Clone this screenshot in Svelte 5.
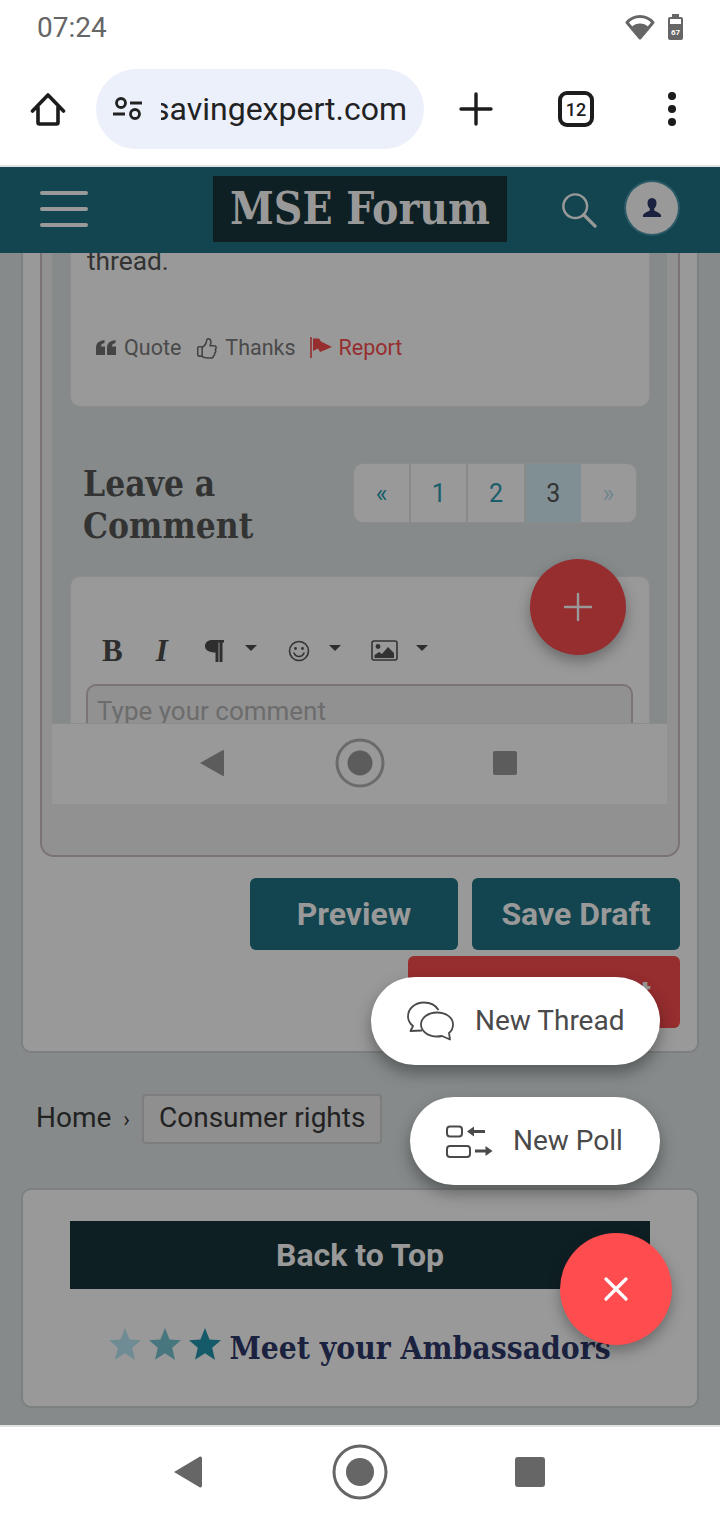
<script>
  const pages = [
    { label: "«", kind: "nav" },
    { label: "1", kind: "" },
    { label: "2", kind: "" },
    { label: "3", kind: "current" },
    { label: "»", kind: "off" },
  ];
  const starColors = ["#6f8c95", "#47767f", "#155a68"];
  const star = "M12 0l3.4 8.6 8.6.6-6.6 5.7 2.1 9.1L12 19l-7.5 4.9 2.1-9.1L0 9.2l8.6-.6z";
</script>

<div class="phone">
  <div class="status">
    <span class="clock">07:24</span>
    <div class="status-icons">
      <svg width="30" height="26" viewBox="0 0 30 26">
        <path d="M15 24 2 8.5C5.5 4.5 10 2.5 15 2.5s9.5 2 13 6z" fill="none" stroke="#666" stroke-width="3" stroke-linejoin="round" />
        <path d="M15 24 7 12.5C9 10.5 12 9.5 15 9.5s6 1 8 3z" fill="#666" />
      </svg>
      <div class="battery"><span>67</span></div>
    </div>
  </div>

  <div class="browser">
    <svg class="home" width="36" height="36" viewBox="0 0 36 36">
      <path d="M2.5 20 18 4l15.500 16M8 16v15.500c0 .8.700 1.500 1.500 1.500h17c.8 0 1.500-.7 1.500-1.500V16" fill="none" stroke="#1c1c1c" stroke-width="3.600" stroke-linecap="round" stroke-linejoin="round" />
    </svg>
    <div class="url">
      <svg width="30" height="24" viewBox="0 0 30 24">
        <circle cx="8" cy="6" r="4.500" fill="none" stroke="#222" stroke-width="2.800" />
        <path d="M17 6h12M0 17h12" stroke="#222" stroke-width="2.800" />
        <circle cx="22" cy="17" r="4.500" fill="none" stroke="#222" stroke-width="2.800" />
      </svg>
      <div class="url-text"><span>moneysavingexpert.com</span></div>
    </div>
    <svg class="plus" width="34" height="34" viewBox="0 0 34 34">
      <path d="M17 2v30M2 17h30" stroke="#1c1c1c" stroke-width="3.400" stroke-linecap="round" />
    </svg>
    <div class="tabs">12</div>
    <div class="dots"><i></i><i></i><i></i></div>
  </div>

  <div class="viewport">
    <header class="site-head">
      <div class="burger"><i></i><i></i><i></i></div>
      <div class="logo">MSE Forum</div>
      <svg class="search" width="36" height="36" viewBox="0 0 38 38">
        <circle cx="15" cy="15" r="12.500" fill="none" stroke="#999" stroke-width="2.600" />
        <path d="M24 24 36 36" stroke="#999" stroke-width="3.400" stroke-linecap="round" />
      </svg>
      <div class="avatar">
        <svg width="22" height="22" viewBox="0 0 22 22">
          <path d="M11 1c3 0 4.500 2.200 4.500 5 0 2.500-1 4.500-2.300 5.600v1.600c0 1 4.800 1.600 6.800 4.800v2H2v-2c2-3.200 6.800-3.800 6.800-4.800v-1.600C7.500 10.500 6.500 8.500 6.500 6c0-2.800 1.500-5 4.500-5z" fill="#1b2240" />
        </svg>
      </div>
    </header>

    <div class="scroll">
      <section class="card reply">
        <div class="frame">
          <div class="shot">
            <div class="screen">
              <div class="post">
                <p class="post-text">thread.</p>
                <div class="actions">
                  <span class="action">
                    <svg width="20" height="15" viewBox="0 0 20 15">
                      <path d="M0 15V8C0 3.500 2.500.8 8.500 0v3C6 3.500 5 4.800 5 6.500h4V15zM11 15V8c0-4.500 2.500-7.200 8.500-8v3c-2.500.5-3.500 1.800-3.500 3.500h4V15z" fill="#444" />
                    </svg>
                    Quote
                  </span>
                  <span class="action">
                    <svg width="21" height="22" viewBox="0 0 24 24">
                      <path d="M7 10.500v10.800H3.500c-.8 0-1.500-.7-1.500-1.500V12c0-.8.700-1.500 1.500-1.500zM7 11.500c2.500-1.500 4.500-4 5-7 .2-1.500.5-3 2-3 2 0 3 2 3 4 0 1.500-.5 3-1 4h4.500c1.300 0 2.500 1 2.500 2.300 0 1-.5 1.700-1 2.200.4.500.6 1 .6 1.700 0 1-.6 1.800-1.400 2.200.1.300.2.700.2 1 0 1-.7 1.800-1.500 2.100.1 1.300-1 2.500-2.400 2.500H13c-2.500 0-4-1-6-1.500" fill="none" stroke="#444" stroke-width="1.800" stroke-linejoin="round" />
                    </svg>
                    Thanks
                  </span>
                  <span class="action report">
                    <svg width="22" height="21" viewBox="0 0 22 21">
                      <path d="M1 0v21" stroke="#962d2f" stroke-width="1.600" />
                      <path d="M3 1.500h6l2 3 11 5.500-12 5-2-3.500-5 2.500z" fill="#962d2f" />
                    </svg>
                    Report
                  </span>
                </div>
              </div>

              <div class="comment-head">
                <h2>Leave a<br />Comment</h2>
                <div class="pager">
                  {#each pages as p}
                    <span class={["page", p.kind]}>{p.label}</span>
                  {/each}
                </div>
              </div>

              <div class="editor">
                <div class="toolbar">
                  <b class="tool-b">B</b>
                  <i class="tool-i">I</i>
                  <svg class="tool-p" width="19" height="22" viewBox="0 0 19 22">
                    <path d="M7 0h12v2.500h-1.500V22h-3V2.500h-1V22h-3V12.500C4 12.500 0 10 0 6.200S3 0 7 0z" fill="#2e2e2e" />
                  </svg>
                  <span class="caret first"></span>
                  <svg class="smile" width="22" height="22" viewBox="0 0 22 22">
                    <circle cx="11" cy="11" r="9.500" fill="none" stroke="#333" stroke-width="1.600" />
                    <circle cx="7.500" cy="8.500" r="1.400" fill="#333" />
                    <circle cx="14.500" cy="8.500" r="1.400" fill="#333" />
                    <path d="M6 13c1 2.500 3 3.500 5 3.500s4-1 5-3.500" fill="none" stroke="#333" stroke-width="1.600" stroke-linecap="round" />
                  </svg>
                  <span class="caret"></span>
                  <svg class="pic" width="27" height="21" viewBox="0 0 27 21">
                    <rect x="1" y="1" width="25" height="19" rx="2" fill="none" stroke="#333" stroke-width="1.600" />
                    <circle cx="7" cy="6.500" r="2.400" fill="#333" />
                    <path d="M3.500 18v-3l4.500-3 3 2 6-7 6 6v5z" fill="#333" />
                  </svg>
                  <span class="caret last"></span>
                </div>
                <div class="textarea">Type your comment</div>
              </div>

              <div class="fab-add">
                <svg width="30" height="30" viewBox="0 0 30 30">
                  <path d="M15 2v26M2 15h26" stroke="#999" stroke-width="2.400" stroke-linecap="round" />
                </svg>
              </div>
            </div>

            <div class="shot-nav">
              <svg width="26" height="28" viewBox="0 0 26 28"><path d="M1 14 24 1c.5 0 1 .5 1 1v24c0 .5-.5 1-1 1z" fill="#5c5c5c" /></svg>
              <svg width="50" height="50" viewBox="0 0 50 50">
                <circle cx="25" cy="25" r="23" fill="none" stroke="#6b6b6b" stroke-width="3" />
                <circle cx="25" cy="25" r="12.500" fill="#5c5c5c" />
              </svg>
              <div class="shot-square"></div>
            </div>
          </div>
        </div>

        <div class="form-buttons">
          <button class="btn teal">Preview</button>
          <button class="btn teal">Save Draft</button>
          <button class="btn red">Post Comment</button>
        </div>
      </section>

      <nav class="crumbs">
        <span class="home-link">Home</span>
        <span class="sep">›</span>
        <span class="crumb-box"><span>Consumer rights</span></span>
      </nav>

      <section class="card foot">
        <div class="to-top">Back to Top</div>
        <div class="ambassadors">
          {#each starColors as c}
            <svg width="32" height="32" viewBox="0 0 24 24"><path d={star} fill={c} /></svg>
          {/each}
          <span>Meet your Ambassadors</span>
        </div>
      </section>
    </div>

    <!-- speed dial, above the dimmed page -->
    <div class="pill thread">
      <svg width="48" height="40" viewBox="0 0 48 40">
        <path d="M15 29.500 3.500 30l2.500-5C2.800 22.500 1 19 1 15.500 1 7.500 8 1.500 17 1.500c6 0 11.500 2.500 14.500 7.500" fill="none" stroke="#4a4a4a" stroke-width="1.800" stroke-linejoin="round" />
        <path d="M30 11.500c9 0 16 5 16 12 0 3.500-1.500 6.500-4 8.500l1 6.500-8-3.500c-1.500.3-3.300.5-5 .5-9 0-16-5.500-16-12s7-12 16-12z" fill="none" stroke="#4a4a4a" stroke-width="1.800" stroke-linejoin="round" />
      </svg>
      <span class="pill-label">New Thread</span>
    </div>
    <div class="pill poll">
      <svg width="47" height="33" viewBox="0 0 47 33">
        <rect x="1" y="1.500" width="15" height="10" rx="3" fill="none" stroke="#4a4a4a" stroke-width="2" />
        <rect x="1" y="21" width="23" height="11" rx="3" fill="none" stroke="#4a4a4a" stroke-width="2" />
        <path d="M21 6.500 28 1.500v3.500h11v3H28v3.500zM46.500 26l-7-5v3.500H29v3h10.500V31z" fill="#4a4a4a" />
      </svg>
      <span class="pill-label">New Poll</span>
    </div>
    <div class="fab-close">
      <svg width="26" height="26" viewBox="0 0 26 26">
        <path d="M3 3l20 20M23 3 3 23" stroke="#fff" stroke-width="3.200" stroke-linecap="round" />
      </svg>
    </div>
  </div>

  <div class="android-nav">
    <svg width="30" height="34" viewBox="0 0 30 34"><path d="M1 17 27 1.500c1 0 2 .7 2 1.500v28c0 .8-1 1.500-2 1.500z" fill="#666" /></svg>
    <svg width="56" height="56" viewBox="0 0 56 56">
      <circle cx="28" cy="28" r="26" fill="none" stroke="#666" stroke-width="3" />
      <circle cx="28" cy="28" r="14" fill="#666" />
    </svg>
    <div class="nav-square"></div>
  </div>
</div>

<style>
  :global(body) {
    margin: 0;
    background: #fff;
  }

  .phone {
    width: 720px;
    height: 1520px;
    display: flex;
    flex-direction: column;
    overflow: hidden;
    font-family: Roboto, "Liberation Sans", sans-serif;
  }

  /* Status bar */
  .status {
    height: 55px;
    display: flex;
    align-items: center;
    justify-content: space-between;
    padding: 0 37px 1px;
    box-sizing: border-box;
  }

  .clock {
    font-size: 28px;
    color: #666;
  }

  .status-icons {
    display: flex;
    align-items: center;
    gap: 13px;
  }

  .battery {
    position: relative;
    width: 15px;
    height: 23px;
    margin-top: 2px;
    background: #666;
    border-radius: 2px;
    display: flex;
    justify-content: center;
    align-items: flex-end;
  }

  .battery::before {
    content: "";
    position: absolute;
    top: -3px;
    left: 4px;
    width: 7px;
    height: 3px;
    background: #666;
  }

  .battery::after {
    content: "";
    position: absolute;
    top: 2px;
    left: 2px;
    right: 2px;
    height: 5px;
    background: #fff;
  }

  .battery span {
    font-size: 8px;
    line-height: 14px;
    color: #fff;
    font-weight: 700;
  }

  /* Browser toolbar */
  .browser {
    height: 110px;
    border-bottom: 2px solid #e0e2e2;
    display: flex;
    align-items: flex-start;
    position: relative;
  }

  .home {
    margin: 36px 0 0 30px;
  }

  .url {
    margin: 14px 0 0 30px;
    width: 328px;
    height: 80px;
    border-radius: 40px;
    background: #ecf0fa;
    display: flex;
    align-items: center;
    box-sizing: border-box;
    padding: 0 17px 0 17px;
    gap: 18px;
    flex: none;
  }

  .url svg {
    flex: none;
    margin-top: -1px;
  }

  .url-text {
    flex: 1;
    overflow: hidden;
    display: flex;
    justify-content: flex-end;
    font-size: 32px;
    color: #222;
    white-space: nowrap;
  }

  .url-text span {
    flex: none;
  }

  .plus {
    margin: 37px 0 0 35px;
  }

  .tabs {
    margin: 36px 0 0 65px;
    width: 36px;
    height: 36px;
    box-sizing: border-box;
    border: 4px solid #1c1c1c;
    border-radius: 9px;
    font-size: 18px;
    font-weight: 500;
    color: #1c1c1c;
    display: flex;
    align-items: center;
    justify-content: center;
  }

  .dots {
    margin: 37px 0 0 74px;
    display: flex;
    flex-direction: column;
    gap: 5px;
  }

  .dots i {
    width: 8px;
    height: 8px;
    border-radius: 50%;
    background: #1c1c1c;
  }

  /* Page area */
  .viewport {
    position: relative;
    flex: 1;
    min-height: 0;
    display: flex;
    flex-direction: column;
    background: #868a8a;
  }

  .site-head {
    height: 86px;
    flex: none;
    background: #134550;
    position: relative;
    display: flex;
    align-items: flex-start;
  }

  .burger {
    margin: 24px 0 0 40px;
    display: flex;
    flex-direction: column;
    gap: 12px;
  }

  .burger i {
    width: 48px;
    height: 4px;
    border-radius: 2px;
    background: #999;
  }

  .logo {
    margin: 9px 0 0 125px;
    width: 294px;
    height: 66px;
    background: #0f2024;
    color: #999;
    font-family: "DejaVu Serif Condensed", "DejaVu Serif", serif;
    font-weight: 700;
    font-size: 44px;
    line-height: 66px;
    text-align: center;
    white-space: nowrap;
  }

  .search {
    margin: 25px 0 0 54px;
  }

  .avatar {
    margin: 15px 0 0 29px;
    width: 52px;
    height: 52px;
    box-sizing: border-box;
    border-radius: 50%;
    background: #999;
    box-shadow: 0 0 0 2px #2b5a66;
    display: flex;
    align-items: center;
    justify-content: center;
  }

  .scroll {
    flex: 1;
    min-height: 0;
    overflow: hidden;
    padding: 0 21px;
  }

  .card {
    background: #999;
    border: 2px solid #7d8080;
    border-radius: 10px;
    box-sizing: border-box;
  }

  .card.reply {
    height: 800px;
    border-top: none;
    border-radius: 0 0 10px 10px;
    padding: 0 17px;
  }

  .frame {
    height: 604px;
    box-sizing: border-box;
    border: 2px solid #7b7375;
    border-top: none;
    border-radius: 0 0 14px 14px;
    background: #919191;
    padding: 0 11px 0 10px;
  }

  .screen {
    position: relative;
    height: 470px;
    overflow: hidden;
    background: #868a8a;
  }

  .post {
    display: flow-root;
    margin: 0 17px 0 18px;
    height: 154px;
    box-sizing: border-box;
    background: #999;
    border: 1px solid #8c8c8c;
    border-top: none;
    border-radius: 0 0 10px 10px;
    padding-left: 16px;
  }

  .post-text {
    margin: -7px 0 0;
    font-size: 26.300px;
    line-height: 30px;
    color: #333;
  }

  .actions {
    margin-top: 59px;
    display: flex;
    align-items: center;
    gap: 15px;
    padding-left: 9px;
  }

  .action {
    display: flex;
    align-items: center;
    gap: 8px;
    font-size: 21.500px;
    color: #4a4a4a;
  }

  .action.report {
    color: #962d2f;
    gap: 7px;
    margin-left: -1px;
  }

  .comment-head {
    margin-top: 56px;
    height: 113px;
    display: flex;
    align-items: flex-start;
    justify-content: space-between;
    padding: 0 30px 0 31px;
  }

  h2 {
    margin: 0;
    font-family: "DejaVu Serif Condensed", "DejaVu Serif", serif;
    font-weight: 700;
    font-size: 35px;
    line-height: 42px;
    color: #333;
  }

  .pager {
    display: flex;
    width: 284px;
    height: 60px;
    border-radius: 10px;
    overflow: hidden;
    background: #999;
    border: 1px solid #8c8c8c;
    box-sizing: border-box;
  }

  .page {
    flex: 1;
    display: flex;
    align-items: center;
    justify-content: center;
    font-size: 25px;
    color: #1a5d6b;
    border-right: 2px solid #8a8a8a;
  }

  .page:last-child {
    border-right: none;
  }

  .page.current {
    background: #7f8f94;
    color: #333;
    border-right: none;
  }

  .page.off {
    color: #70868c;
  }

  .editor {
    margin: 0 17px 0 18px;
    height: 200px;
    box-sizing: border-box;
    background: #999;
    border: 1px solid #8c8c8c;
    border-radius: 10px 10px 0 0;
    padding: 0 16px 0 15px;
  }

  .toolbar {
    height: 107px;
    display: flex;
    align-items: center;
    padding-top: 40px;
    box-sizing: border-box;
    color: #2e2e2e;
  }

  .tool-b,
  .tool-i {
    font-family: "Liberation Serif", serif;
    font-size: 31px;
  }

  .tool-b {
    margin-left: 16px;
  }

  .tool-i {
    margin-left: 33px;
    font-weight: 700;
  }

  .tool-p {
    margin-left: 37px;
  }

  .caret {
    width: 0;
    height: 0;
    border: 6px solid transparent;
    border-top-color: #2e2e2e;
    border-bottom: none;
    margin: -6px 0 0 30px;
  }

  .caret.first {
    margin-left: 21px;
  }

  .caret.last {
    margin-left: 18px;
  }

  .smile {
    margin-left: 31px;
  }

  .caret + .smile + .caret {
    margin-left: 19px;
  }

  .pic {
    margin-left: 30px;
  }

  .textarea {
    height: 90px;
    box-sizing: border-box;
    border: 2px solid #7b7375;
    border-radius: 10px;
    background: #919191;
    padding: 9px;
    font-size: 26px;
    line-height: 32px;
    color: #6c6c6c;
  }

  .fab-add {
    position: absolute;
    left: 478px;
    top: 306px;
    width: 96px;
    height: 96px;
    border-radius: 50%;
    background: #962d2f;
    box-shadow: 0 6px 14px rgba(0, 0, 0, 0.3);
    display: flex;
    align-items: center;
    justify-content: center;
  }

  .shot-nav {
    height: 81px;
    background: #999;
    border-top: 1px solid #8c8c8c;
    box-sizing: border-box;
    display: flex;
    align-items: center;
    padding: 0 0 2px 147px;
  }

  .shot-nav svg:nth-child(2) {
    margin-left: 110px;
  }

  .shot-square {
    margin-left: 108px;
    width: 24px;
    height: 24px;
    border-radius: 2px;
    background: #5c5c5c;
  }

  .form-buttons {
    margin-top: 21px;
    display: flex;
    flex-wrap: wrap;
    justify-content: flex-end;
    gap: 6px 14px;
  }

  .btn {
    height: 72px;
    border: none;
    border-radius: 6px;
    font-family: inherit;
    font-size: 32px;
    font-weight: 700;
    color: #999;
    padding: 0;
  }

  .btn.teal {
    width: 208px;
    background: #134550;
  }

  .btn.red {
    width: 272px;
    background: #962d2f;
  }

  .crumbs {
    margin-top: 41px;
    height: 50px;
    display: flex;
    align-items: center;
    padding-left: 16px;
    font-size: 28px;
    color: #222;
  }

  .home-link,
  .crumb-box span {
    margin-top: -3px;
  }

  .home-link {
    margin-left: -1px;
  }

  .sep {
    margin: 0 12px;
    font-size: 22px;
  }

  .crumb-box {
    height: 50px;
    box-sizing: border-box;
    padding: 0 15px;
    display: flex;
    align-items: center;
    background: #8f8f8f;
    border: 2px solid #7d7d7d;
    border-radius: 4px;
  }

  .card.foot {
    margin-top: 44px;
    height: 220px;
    padding: 31px 47px 0;
  }

  .to-top {
    height: 68px;
    background: #0e1f24;
    color: #999;
    font-size: 32px;
    font-weight: 700;
    display: flex;
    align-items: center;
    justify-content: center;
  }

  .ambassadors {
    margin-top: 40px;
    display: flex;
    align-items: center;
    justify-content: center;
    gap: 9px;
    font-family: "DejaVu Serif Condensed", "DejaVu Serif", serif;
    font-weight: 700;
    font-size: 31.500px;
    color: #1b2240;
    white-space: nowrap;
  }

  .ambassadors svg {
    margin-right: -1px;
    margin-top: -8px;
    flex: none;
  }

  /* Speed dial */
  .pill {
    position: absolute;
    right: 60px;
    height: 88px;
    border-radius: 44px;
    background: #fff;
    box-shadow: 0 8px 16px rgba(0, 0, 0, 0.35);
    display: flex;
    align-items: center;
    gap: 20px;
    box-sizing: border-box;
    padding-left: 36px;
    font-size: 28px;
    color: #4a4a4a;
  }

  .pill-label {
    margin-top: -2px;
  }

  .pill.thread {
    top: 810px;
    width: 289px;
  }

  .pill.poll {
    top: 930px;
    width: 250px;
  }

  .fab-close {
    position: absolute;
    left: 560px;
    top: 1066px;
    width: 112px;
    height: 112px;
    border-radius: 50%;
    background: #ff4d4f;
    box-shadow: 0 6px 14px rgba(0, 0, 0, 0.3);
    display: flex;
    align-items: center;
    justify-content: center;
  }

  /* Android nav */
  .android-nav {
    height: 95px;
    flex: none;
    border-top: 2px solid #e0e2e2;
    box-sizing: border-box;
    background: #fff;
    display: flex;
    align-items: center;
    padding: 0 0 4px 173px;
  }

  .android-nav svg:nth-child(2) {
    margin-left: 129px;
  }

  .nav-square {
    margin-left: 127px;
    width: 30px;
    height: 30px;
    border-radius: 3px;
    background: #666;
  }
</style>
